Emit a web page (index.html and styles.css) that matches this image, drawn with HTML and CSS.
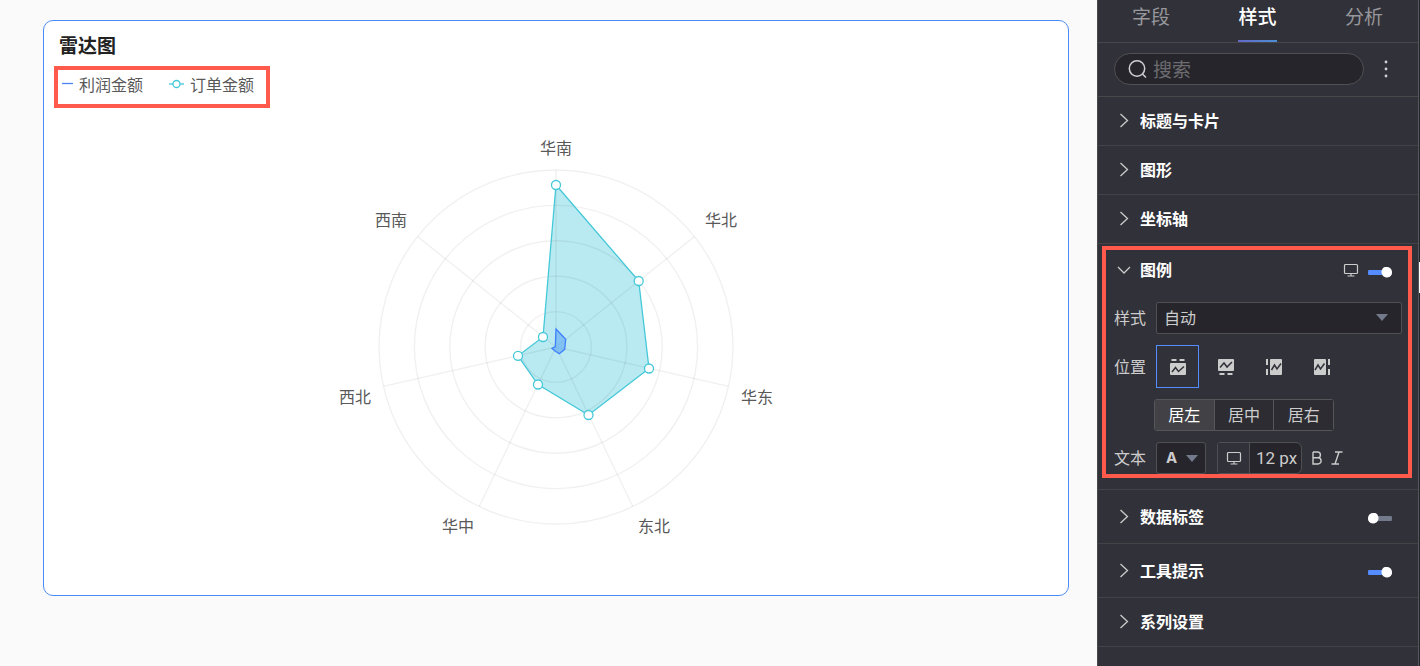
FILE: index.html
```html
<!DOCTYPE html>
<html lang="zh-CN">
<head>
    <meta charset="UTF-8">
    <meta name="viewport" content="width=device-width, initial-scale=1.0">
    <title>雷达图</title>
    <link rel="stylesheet" href="styles.css">
</head>
<body>
    <!-- shared icons -->
    <svg class="sprite" aria-hidden="true">
        <symbol id="chevron" viewBox="0 0 24 24">
            <path d="M8.5 5 L15.5 11.5 L8.5 18" fill="none" stroke="currentColor" stroke-width="1.3"/>
        </symbol>
        <symbol id="chevron-down" viewBox="0 0 24 24">
            <path d="M6 9 L12 15 L18 9" fill="none" stroke="currentColor" stroke-width="1.3"/>
        </symbol>
        <symbol id="monitor" viewBox="0 0 16 14">
            <rect x="1.5" y="1.5" width="13" height="9" rx="1" fill="none" stroke="currentColor" stroke-width="1.2"/>
            <path d="M8 10.5 V13 M4.5 13 H11.5" fill="none" stroke="currentColor" stroke-width="1.2"/>
        </symbol>
    </svg>

    <div class="layout">
        <main class="canvas">
            <section class="card">
                <h1>雷达图</h1>
                <div class="legend">
                    <span class="legend-item">
                        <svg width="12" height="10" viewBox="0 0 12 10"><path d="M0 4.5 H11" stroke="#4b86f5" stroke-width="1.3"/></svg>
                        利润金额
                    </span>
                    <span class="legend-item">
                        <svg width="16" height="10" viewBox="0 0 16 10"><path d="M0 5 H15" stroke="#45c8d8" stroke-width="1.3"/><circle cx="7.5" cy="5" r="3.5" fill="#fff" stroke="#45c8d8" stroke-width="1.3"/></svg>
                        订单金额
                    </span>
                </div>
                <svg class="radar" width="440" height="410" viewBox="0 0 440 410" role="img" aria-label="雷达图">
                    <g class="area-order">
                        <polygon points="220,49 302.7,145 313,232.5 252.5,279 202,248.5 182,219.8 207,201"/>
                    </g>
                    <g class="grid">
                        <circle cx="220" cy="211" r="35.4"/>
                        <circle cx="220" cy="211" r="70.8"/>
                        <circle cx="220" cy="211" r="106.2"/>
                        <circle cx="220" cy="211" r="141.6"/>
                        <circle cx="220" cy="211" r="177"/>
                        <path d="M220 211 V34 M220 211 L358.4 100.6 M220 211 L392.6 250.4 M220 211 L296.8 370.5 M220 211 L143.2 370.5 M220 211 L47.4 250.4 M220 211 L81.6 100.6"/>
                    </g>
                    <g class="line-order">
                        <polygon points="220,49 302.7,145 313,232.5 252.5,279 202,248.5 182,219.8 207,201"/>
                        <circle cx="220" cy="49" r="4.5"/>
                        <circle cx="302.7" cy="145" r="4.5"/>
                        <circle cx="313" cy="232.5" r="4.5"/>
                        <circle cx="252.5" cy="279" r="4.5"/>
                        <circle cx="202" cy="248.5" r="4.5"/>
                        <circle cx="182" cy="219.8" r="4.5"/>
                        <circle cx="207" cy="201" r="4.5"/>
                    </g>
                    <polygon class="profit" points="220,193 229.7,203.3 228.7,213.3 223.3,217.7 218.7,214.7 216,212.3 219.3,210.7"/>
                    <g class="labels">
                        <text x="220" y="18">华南</text>
                        <text x="385" y="90">华北</text>
                        <text x="421" y="267">华东</text>
                        <text x="318" y="396">东北</text>
                        <text x="122" y="396">华中</text>
                        <text x="19" y="267">西北</text>
                        <text x="55" y="90">西南</text>
                    </g>
                </svg>
            </section>
        </main>

        <aside class="panel">
            <nav class="tabs">
                <button type="button" class="tab">字段</button>
                <button type="button" class="tab active">样式</button>
                <button type="button" class="tab">分析</button>
            </nav>

            <div class="search-row">
                <label class="search">
                    <svg width="20" height="20" viewBox="0 0 20 20" fill="none" stroke="#d0d0d3" stroke-width="1.5"><circle cx="9" cy="9.5" r="7.7"/><path d="M14.5 15 L18 18.5"/></svg>
                    <input type="text" placeholder="搜索" aria-label="搜索">
                </label>
                <button type="button" class="more" aria-label="更多">
                    <svg width="4" height="18" viewBox="0 0 4 18" fill="#d0d0d3"><circle cx="2" cy="2" r="1.4"/><circle cx="2" cy="9" r="1.4"/><circle cx="2" cy="16" r="1.4"/></svg>
                </button>
            </div>

            <section class="group">
                <div class="group-head"><svg class="arrow"><use href="#chevron"/></svg><h2>标题与卡片</h2></div>
            </section>
            <section class="group">
                <div class="group-head"><svg class="arrow"><use href="#chevron"/></svg><h2>图形</h2></div>
            </section>
            <section class="group">
                <div class="group-head"><svg class="arrow"><use href="#chevron"/></svg><h2>坐标轴</h2></div>
            </section>

            <section class="group group-open">
                <div class="highlight">
                    <div class="group-head">
                        <svg class="arrow"><use href="#chevron-down"/></svg>
                        <h2>图例</h2>
                        <svg class="monitor"><use href="#monitor"/></svg>
                        <input type="checkbox" class="switch" aria-label="图例" checked>
                    </div>
                    <div class="rows">
                        <div class="row">
                            <label class="row-label" for="legendStyle">样式</label>
                            <div class="select-wrap">
                                <select id="legendStyle"><option>自动</option></select>
                                <span class="caret"></span>
                            </div>
                        </div>
                        <div class="row">
                            <span class="row-label">位置</span>
                            <div class="positions">
                                <button type="button" class="pos active" aria-label="上">
                                    <svg width="16" height="16" viewBox="0 0 16 16"><path class="fill" d="M1.5 0h5v2h-5z M9.5 0h5v2h-5z M1 4h14q1 0 1 1v10q0 1-1 1H1q-1 0-1-1V5q0-1 1-1z"/><path class="cut" d="M2 13 L5.5 8.5 L8.5 12.5 L14 7.5"/></svg>
                                </button>
                                <button type="button" class="pos" aria-label="下">
                                    <svg width="16" height="16" viewBox="0 0 16 16"><path class="fill" d="M1.5 14h5v2h-5z M9.5 14h5v2h-5z M1 0h14q1 0 1 1v10q0 1-1 1H1q-1 0-1-1V1q0-1 1-1z"/><path class="cut" d="M2 8.5 L6 4 L9 8 L14 3"/></svg>
                                </button>
                                <button type="button" class="pos" aria-label="左">
                                    <svg width="16" height="16" viewBox="0 0 16 16"><path class="fill" d="M0 0h2v6H0z M0 10h2v6H0z M5 0h10q1 0 1 1v14q0 1-1 1H5q-1 0-1-1V1q0-1 1-1z"/><path class="cut" d="M5.5 11 L8.5 6 L11 10 L15 4.5"/></svg>
                                </button>
                                <button type="button" class="pos" aria-label="右">
                                    <svg width="16" height="16" viewBox="0 0 16 16"><path class="fill" d="M14 0h2v6h-2z M14 10h2v6h-2z M1 0h10q1 0 1 1v14q0 1-1 1H1q-1 0-1-1V1q0-1 1-1z"/><path class="cut" d="M1 11 L4 6 L6.5 10 L10.5 4.5"/></svg>
                                </button>
                            </div>
                        </div>
                        <div class="row">
                            <div class="align">
                                <button type="button" class="active">居左</button>
                                <button type="button">居中</button>
                                <button type="button">居右</button>
                            </div>
                        </div>
                        <div class="row">
                            <span class="row-label">文本</span>
                            <button type="button" class="color">A<span class="caret"></span></button>
                            <div class="size">
                                <button type="button" aria-label="自适应"><svg class="monitor"><use href="#monitor"/></svg></button>
                                <input type="text" value="12 px" aria-label="字号">
                            </div>
                            <button type="button" class="font-btn" aria-label="加粗">
                                <svg width="12" height="14" viewBox="0 0 12 14"><path d="M2 1 H6.5 a2.8 2.8 0 0 1 0 5.8 H2 M6.5 6.8 H7 a3 3 0 0 1 0 6.2 H2 V1"/></svg>
                            </button>
                            <button type="button" class="font-btn" aria-label="斜体">
                                <svg width="12" height="14" viewBox="0 0 12 14"><path d="M4 1 H11.5 M0.5 13 H8 M8 1 L4 13"/></svg>
                            </button>
                        </div>
                    </div>
                </div>
            </section>

            <section class="group tall">
                <div class="group-head"><svg class="arrow"><use href="#chevron"/></svg><h2>数据标签</h2><input type="checkbox" class="switch" aria-label="数据标签"></div>
            </section>
            <section class="group tall">
                <div class="group-head"><svg class="arrow"><use href="#chevron"/></svg><h2>工具提示</h2><input type="checkbox" class="switch" aria-label="工具提示" checked></div>
            </section>
            <section class="group">
                <div class="group-head"><svg class="arrow"><use href="#chevron"/></svg><h2>系列设置</h2></div>
            </section>
        </aside>
        <div class="edge"></div>
    </div>
</body>
</html>
```
FILE: styles.css
```css
* {
    margin: 0;
    padding: 0;
    box-sizing: border-box;
}

body {
    background: #fafafa;
    font-family: "Noto Sans CJK SC", sans-serif;
    font-size: 16px;
    line-height: 24px;
}

button, input, select {
    font: inherit;
    color: inherit;
    background: none;
    border: none;
    outline: none;
}

button {
    cursor: pointer;
}

svg {
    display: block;
    flex: none;
}

.sprite {
    position: absolute;
    width: 0;
    height: 0;
}

.layout {
    display: flex;
    min-height: 100vh;
}

/* chart */
.canvas {
    flex: 1;
    padding: 20px 28px 70px 43px;
    display: flex;
}

.card {
    flex: 1;
    display: flex;
    flex-direction: column;
    align-items: flex-start;
    padding: 12px 10px;
    background: #fff;
    border: 1px solid #4b8bf7;
    border-radius: 10px;
}

.card h1 {
    padding-left: 5px;
    font-size: 19px;
    line-height: 24px;
    font-weight: 600;
    color: #222;
}

.legend {
    display: flex;
    gap: 26px;
    margin-top: 9px;
    padding: 2px 12px 8px 4px;
    border: 4px solid #ff5a4c;
    color: #595959;
}

.legend-item {
    display: flex;
    align-items: center;
    gap: 5px;
}

.radar {
    align-self: center;
    max-width: 100%;
    margin-top: 28px;
}

.grid {
    fill: none;
    stroke: #000;
    stroke-opacity: 0.06;
    stroke-width: 1.4;
}

.area-order {
    fill: #b9eaf1;
}

.line-order {
    fill: none;
    stroke: #45c8d8;
    stroke-width: 1.3;
}

.line-order circle {
    fill: #fff;
}

.profit {
    fill: #4b9bf5;
    fill-opacity: 0.5;
    stroke: #4080ff;
    stroke-width: 1.3;
}

.labels {
    fill: #595959;
    text-anchor: middle;
}

/* settings panel */
.panel {
    width: 322px;
    flex: none;
    background: #313139;
    border-left: 1px solid #48484b;
    border-right: 1px solid #55555a;
    color: #ccc;
}

.tabs {
    display: flex;
    justify-content: space-between;
    height: 43px;
    padding: 0 35px 0 34px;
    border-bottom: 1px solid #48484b;
}

.tab {
    padding-bottom: 8px;
    font-size: 19px;
    color: #98989c;
    border-bottom: 2px solid transparent;
}

.tab.active {
    color: #fff;
    font-weight: 500;
    border-image: linear-gradient(90deg, #6466ca, #4b8fd4) 1;
}

.search-row {
    display: flex;
    align-items: center;
    height: 54px;
    padding: 0 22px 2px 16px;
    border-bottom: 1px solid #48484b;
}

.search {
    flex: 1;
    min-width: 0;
    display: flex;
    align-items: center;
    gap: 5px;
    height: 32px;
    padding: 0 13px;
    background: #26252b;
    border: 1px solid #505054;
    border-radius: 16px;
}

.search input {
    flex: 1;
    min-width: 0;
    font-size: 19px;
}

.search input::placeholder {
    color: #6c6c70;
}

.more {
    display: flex;
    justify-content: center;
    width: 20px;
    margin-left: 12px;
}

.group {
    border-bottom: 1px solid #434347;
}

.group-head {
    display: flex;
    align-items: center;
    gap: 4px;
    height: 48px;
    padding: 0 26px 0 14px;
}

.tall .group-head {
    height: 53px;
}

.group-head h2 {
    flex: 1;
    padding-bottom: 2px;
    font-size: 16px;
    font-weight: 700;
    color: #fff;
}

.arrow {
    width: 24px;
    height: 24px;
}

.monitor {
    width: 16px;
    height: 14px;
}

.switch {
    appearance: none;
    width: 24px;
    height: 11px;
    margin: 4px 0 0 5px;
    background:
        radial-gradient(circle at 5px 5px, #fff 5px, transparent 6px),
        linear-gradient(#737a8c, #737a8c) 0 3px / 24px 5px no-repeat;
    border-radius: 5px;
    cursor: pointer;
}

.switch:checked {
    background:
        radial-gradient(circle at 19px 5px, #fff 5px, transparent 6px),
        linear-gradient(#558cff, #558cff) 0 3px / 24px 5px no-repeat;
}

.group-open {
    padding: 2px 6px 11px 4px;
}

.highlight {
    border: 4px solid #ff5a4c;
}

.highlight .group-head {
    height: 40px;
    padding: 0 16px 0 6px;
}

.rows {
    display: flex;
    flex-direction: column;
    gap: 11px;
    padding: 12px 6px 0 8px;
}

.row {
    display: flex;
    align-items: center;
}

.row-label {
    width: 42px;
    padding-bottom: 2px;
}

.caret {
    border: 6px solid transparent;
    border-top: 7px solid #737a8c;
    border-bottom: 0;
}

.select-wrap {
    position: relative;
    flex: 1;
}

.select-wrap select {
    display: block;
    appearance: none;
    width: 100%;
    height: 32px;
    padding: 0 7px 2px;
    background: #26252b;
    border: 1px solid #505054;
    border-radius: 2px;
}

.select-wrap .caret {
    position: absolute;
    right: 14px;
    top: 12px;
    pointer-events: none;
}

.positions {
    display: flex;
    gap: 5px;
}

.pos {
    display: flex;
    align-items: center;
    justify-content: center;
    width: 43px;
    height: 43px;
    border: 1px solid transparent;
}

.pos.active {
    border-color: #558cff;
}

.pos .fill {
    fill: #ccc;
}

.pos .cut {
    fill: none;
    stroke: #313139;
    stroke-width: 1.5;
}

.align {
    display: flex;
    width: 180px;
    margin-left: 40px;
    border: 1px solid #55555a;
    border-radius: 3px;
}

.align button {
    flex: 1;
    height: 30px;
    padding-bottom: 2px;
    background: #2c2c32;
    border-right: 1px solid #55555a;
}

.align button:last-child {
    border-right: none;
}

.align .active {
    background: #414146;
    color: #fff;
}

.color {
    display: flex;
    align-items: center;
    gap: 9px;
    width: 50px;
    height: 32px;
    padding-left: 9px;
    background: #26252b;
    border: 1px solid #505054;
    border-radius: 3px;
    font-family: Inter, sans-serif;
    font-size: 15px;
    font-weight: 700;
}

.size {
    display: flex;
    margin: 0 9px 0 11px;
    border: 1px solid #505054;
    border-radius: 3px 6px 6px 3px;
    background: #26252b;
}

.size button {
    display: flex;
    align-items: center;
    justify-content: center;
    width: 32px;
    height: 30px;
    background: #313139;
    border-right: 1px solid #505054;
}

.size input {
    width: 51px;
    padding-left: 6px;
    font-family: Roboto, sans-serif;
    font-size: 17px;
}

.font-btn {
    margin-right: 8px;
}

.font-btn path {
    fill: none;
    stroke: #ccc;
    stroke-width: 1.4;
}

/* strip of the next panel with its drag handle */
.edge {
    width: 1px;
    flex: none;
    padding-top: 262px;
    background: #26252b;
}

.edge::before {
    content: '';
    display: block;
    height: 31px;
    background: #fff;
}
```
